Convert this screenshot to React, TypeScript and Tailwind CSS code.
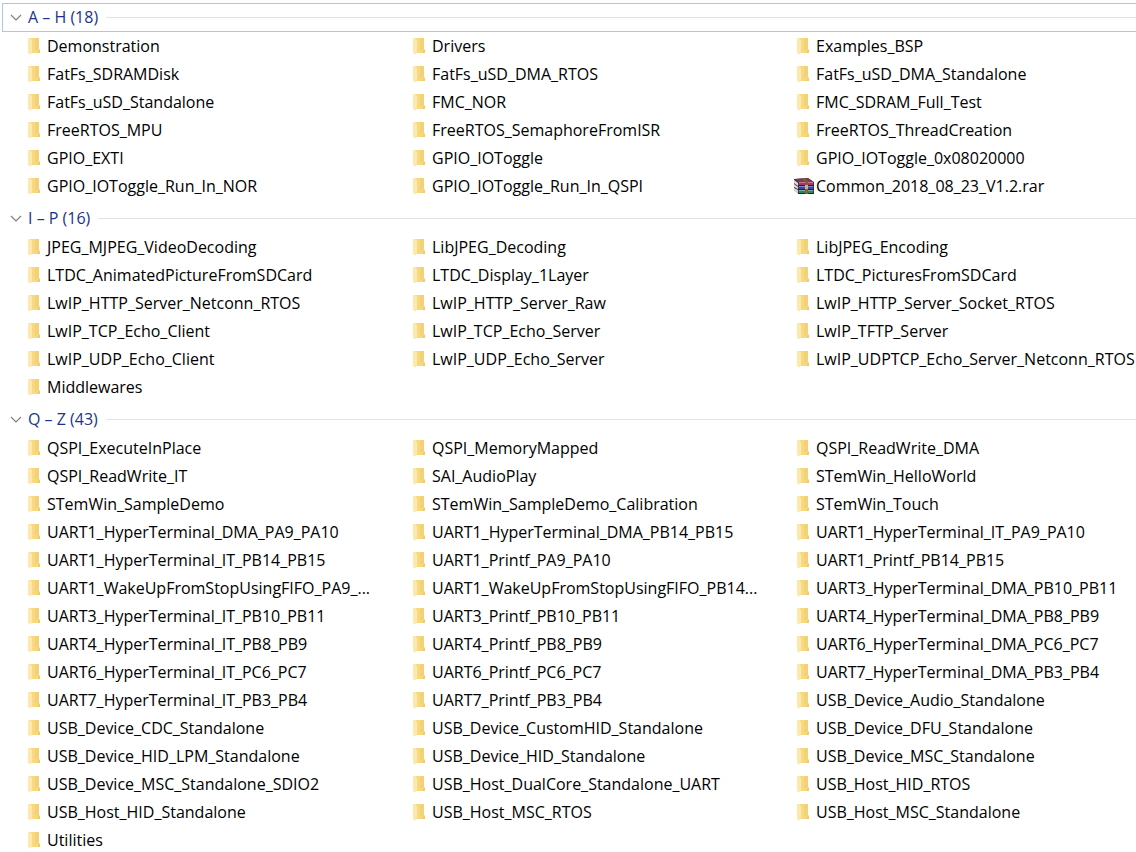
import { useState } from "react";
import clsx from "clsx";

type Group = { title: string; names: string[] };

const groups: Group[] = [
  {
    title: "A – H (18)",
    names: [
      "Demonstration", "Drivers", "Examples_BSP",
      "FatFs_SDRAMDisk", "FatFs_uSD_DMA_RTOS", "FatFs_uSD_DMA_Standalone",
      "FatFs_uSD_Standalone", "FMC_NOR", "FMC_SDRAM_Full_Test",
      "FreeRTOS_MPU", "FreeRTOS_SemaphoreFromISR", "FreeRTOS_ThreadCreation",
      "GPIO_EXTI", "GPIO_IOToggle", "GPIO_IOToggle_0x08020000",
      "GPIO_IOToggle_Run_In_NOR", "GPIO_IOToggle_Run_In_QSPI", "Common_2018_08_23_V1.2.rar",
    ],
  },
  {
    title: "I – P (16)",
    names: [
      "JPEG_MJPEG_VideoDecoding", "LibJPEG_Decoding", "LibJPEG_Encoding",
      "LTDC_AnimatedPictureFromSDCard", "LTDC_Display_1Layer", "LTDC_PicturesFromSDCard",
      "LwIP_HTTP_Server_Netconn_RTOS", "LwIP_HTTP_Server_Raw", "LwIP_HTTP_Server_Socket_RTOS",
      "LwIP_TCP_Echo_Client", "LwIP_TCP_Echo_Server", "LwIP_TFTP_Server",
      "LwIP_UDP_Echo_Client", "LwIP_UDP_Echo_Server", "LwIP_UDPTCP_Echo_Server_Netconn_RTOS",
      "Middlewares",
    ],
  },
  {
    title: "Q – Z (43)",
    names: [
      "QSPI_ExecuteInPlace", "QSPI_MemoryMapped", "QSPI_ReadWrite_DMA",
      "QSPI_ReadWrite_IT", "SAI_AudioPlay", "STemWin_HelloWorld",
      "STemWin_SampleDemo", "STemWin_SampleDemo_Calibration", "STemWin_Touch",
      "UART1_HyperTerminal_DMA_PA9_PA10", "UART1_HyperTerminal_DMA_PB14_PB15", "UART1_HyperTerminal_IT_PA9_PA10",
      "UART1_HyperTerminal_IT_PB14_PB15", "UART1_Printf_PA9_PA10", "UART1_Printf_PB14_PB15",
      "UART1_WakeUpFromStopUsingFIFO_PA9_...", "UART1_WakeUpFromStopUsingFIFO_PB14...", "UART3_HyperTerminal_DMA_PB10_PB11",
      "UART3_HyperTerminal_IT_PB10_PB11", "UART3_Printf_PB10_PB11", "UART4_HyperTerminal_DMA_PB8_PB9",
      "UART4_HyperTerminal_IT_PB8_PB9", "UART4_Printf_PB8_PB9", "UART6_HyperTerminal_DMA_PC6_PC7",
      "UART6_HyperTerminal_IT_PC6_PC7", "UART6_Printf_PC6_PC7", "UART7_HyperTerminal_DMA_PB3_PB4",
      "UART7_HyperTerminal_IT_PB3_PB4", "UART7_Printf_PB3_PB4", "USB_Device_Audio_Standalone",
      "USB_Device_CDC_Standalone", "USB_Device_CustomHID_Standalone", "USB_Device_DFU_Standalone",
      "USB_Device_HID_LPM_Standalone", "USB_Device_HID_Standalone", "USB_Device_MSC_Standalone",
      "USB_Device_MSC_Standalone_SDIO2", "USB_Host_DualCore_Standalone_UART", "USB_Host_HID_RTOS",
      "USB_Host_HID_Standalone", "USB_Host_MSC_RTOS", "USB_Host_MSC_Standalone",
      "Utilities",
    ],
  },
];

function FolderIcon() {
  return (
    <svg className="ml-[3px] h-[18px] w-3" viewBox="0 0 12 18" aria-hidden="true">
      <path d="M2 1H11V12L12 13V16H2Z" fill="#f7d981" />
      <path d="M7 1H11V12L7 14Z" fill="#f4d076" />
      <path d="M0 1H2L4 3V15L2.5 17.5L0 16Z" fill="#fde8ad" />
      <path d="M11 12.5L12 13V16H9Z" fill="#f0cb6a" />
    </svg>
  );
}

function ArchiveIcon() {
  return (
    <svg className="h-4 w-5" viewBox="0 0 20 16" aria-hidden="true">
      <path d="M0 1L14 0L20 4V15L5 16L0 12Z" fill="#4a3440" />
      <path d="M1 1L14 0L19 4H5Z" fill="#7c3a4c" />
      <path d="M0 2L4 5V8L0 5ZM0 6L4 9V11L0 9ZM0 10L4 12V15L0 12Z" fill="#dcdcd6" />
      <path d="M5 4H19V7H5Z" fill="#a8356c" />
      <path d="M5 8H19V11H5Z" fill="#3b45b4" />
      <path d="M5 12H19V15H5Z" fill="#238a57" />
      <path d="M5 4.5H19M5 8.5H19M5 12.5H19" stroke="#ffffff" strokeOpacity=".35" strokeWidth="1" />
      <path d="M4 7.5H20M4 11.5H20M4 15.5H20" stroke="#2a1f2b" strokeWidth="1" />
      <path d="M8 0.5L11 0.3L14 4V16H11V4Z" fill="#8b5a3c" />
      <path d="M11 7H14V11H11Z" fill="#c9b08a" />
    </svg>
  );
}

function FileGroup({ group, active }: { group: Group; active: boolean }) {
  const [open, setOpen] = useState(true);
  return (
    <section className="mb-1">
      <h2>
        <button
          type="button"
          aria-expanded={open}
          onClick={() => setOpen(!open)}
          className={clsx(
            "flex h-[29px] w-full items-center border-y border-l pl-[7px] text-left text-[#1e3287]",
            active ? "border-[#a5cbe4]" : "border-transparent",
          )}
        >
          <svg className={clsx("mr-1.5 h-3 w-3", !open && "-rotate-90")} viewBox="0 0 12 12" fill="none" aria-hidden="true">
            <path d="M1 3L6 8L11 3" stroke="#808080" strokeWidth="1.2" />
          </svg>
          <span className="pb-0.5 whitespace-nowrap">{group.title}</span>
          <span className="ml-2 h-px flex-1 bg-[#e2e2e2]" />
        </button>
      </h2>
      {open && (
        <ul className="grid grid-cols-[385fr_384fr_342fr] pl-[23px]">
          {group.names.map((name) => (
            <li key={name} className="min-w-0">
              <button type="button" className="flex h-7 w-full items-center text-left">
                <span className="w-[22px] shrink-0">
                  {name.endsWith(".rar") ? <ArchiveIcon /> : <FolderIcon />}
                </span>
                <span className="whitespace-nowrap">{name}</span>
              </button>
            </li>
          ))}
        </ul>
      )}
    </section>
  );
}

export default function App() {
  return (
    <main className="h-screen overflow-x-hidden overflow-y-auto bg-white pt-[3px] pl-[2px] font-['Open_Sans','Noto_Sans',sans-serif] text-base leading-5 text-black [scrollbar-width:none]">
      {groups.map((group, i) => (
        <FileGroup key={group.title} group={group} active={i === 0} />
      ))}
    </main>
  );
}
